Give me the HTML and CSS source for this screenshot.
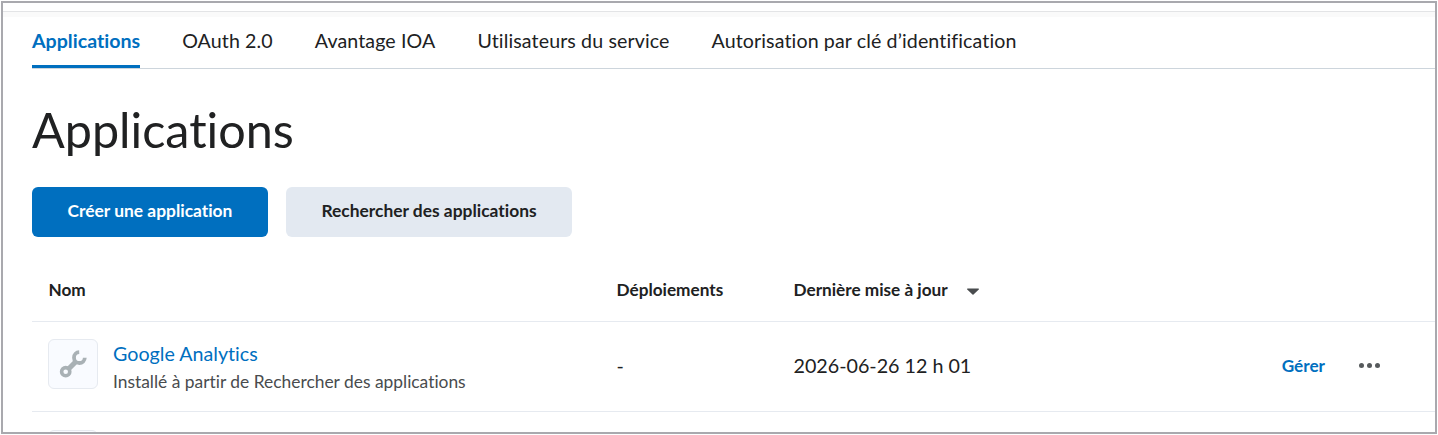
FILE: index.html
```html
<!DOCTYPE html>
<html lang="fr">

<head>
  <meta charset="UTF-8" />
  <title>Applications</title>
  <link rel="stylesheet" href="styles.css">
</head>

<body>
  <div class="frame">
    <div class="top-strip"></div>
    <div class="tab-nav">
      <a class="active" href="#">Applications</a>
      <a href="#">OAuth 2.0</a>
      <a href="#">Avantage IOA</a>
      <a href="#">Utilisateurs du service</a>
      <a href="#">Autorisation par clé d’identification</a>
    </div>
    <div class="content">
      <h1>Applications</h1>
      <div class="actions">
        <button class="btn primary">Créer une application</button>
        <button class="btn">Rechercher des applications</button>
      </div>
      <div class="row head">
        <div class="cell-name">Nom</div>
        <div>Déploiements</div>
        <div class="sort">Dernière mise à jour
          <svg width="12" height="7" viewBox="0 0 12 7"><path d="M.6.4h10.8c.5 0 .8.6.4 1L6.500 6.500c-.3.3-.7.3-1 0L.2 1.400C-.2 1 .1.400.6.400z" fill="#494c4e" /></svg>
        </div>
      </div>
      <div class="row">
        <div class="cell-name app">
          <div class="app-icon">
            <svg width="30" height="30" viewBox="0 0 30 30" fill="none" stroke="#a9b1b5">
              <circle cx="7.700" cy="22.700" r="4.100" stroke-width="3.600" />
              <path d="M10.500 20L18 12.500" stroke-width="5.200" />
              <path d="M21.200 3.200A5.400 5.400 0 1 0 26.800 8.800" stroke-width="3.800" />
            </svg>
          </div>
          <div>
            <a class="app-name" href="#">Google Analytics</a>
            <div class="app-note">Installé à partir de Rechercher des applications</div>
          </div>
        </div>
        <div class="cell-text">-</div>
        <div class="cell-text">2026-06-26 12 h 01</div>
        <div class="row-actions">
          <a href="#">Gérer</a>
          <span class="dots"><i></i><i></i><i></i></span>
        </div>
      </div>
      <div class="next-icon"></div>
    </div>
  </div>
</body>

</html>
```

FILE: styles.css
```css
* {
  margin: 0;
  padding: 0;
  box-sizing: border-box;
}

html,
body {
  height: 435px;
  overflow: hidden;
  background: #fff;
}

body {
  padding: 1px;
  font-family: Lato, "Noto Sans", sans-serif;
  font-variant-ligatures: none;
  color: #202122;
}

.frame {
  height: 433px;
  border: 2px solid #a9a9ae;
  overflow: hidden;
  background: #fff;
}

.top-strip {
  height: 6px;
  margin-top: 8px;
  border-top: 1px solid #e3e4e6;
  background: #fafafa;
}

.tab-nav {
  display: flex;
  gap: 42px;
  height: 52px;
  margin-left: 29px;
  border-bottom: 1px solid #cdd5dc;
}

.tab-nav a {
  height: 51px;
  padding-top: 12px;
  font-size: 19.600px;
  letter-spacing: .12px;
  line-height: 24px;
  color: #202122;
  text-decoration: none;
}

.tab-nav a.active {
  letter-spacing: 0;
  font-weight: 700;
  color: #006fbf;
  border-bottom: 3px solid #006fbf;
}

.content {
  padding-left: 29px;
}

h1 {
  margin-top: 30px;
  font-size: 48.500px;
  line-height: 60px;
  font-weight: 400;
}

.actions {
  display: flex;
  gap: 18px;
  margin-top: 28px;
}

.btn {
  height: 50px;
  width: 286px;
  padding-bottom: 3px;
  border: 0;
  border-radius: 6px;
  background: #e3e9f1;
  font-family: inherit;
  font-variant-ligatures: none;
  font-size: 17.400px;
  font-weight: 700;
  color: #202122;
}

.btn.primary {
  width: 236px;
  background: #006fbf;
  color: #fff;
}

.row {
  display: grid;
  grid-template-columns: 584.500px 177px 1fr auto;
  align-items: center;
  height: 90px;
  border-bottom: 1px solid #e6eaf0;
  font-size: 19.700px;
}

.row.head {
  height: 85px;
  padding-top: 20px;
  font-size: 17.200px;
  font-weight: 700;
}

.cell-name {
  padding-left: 16.500px;
}

.sort svg {
  margin-left: 15px;
  vertical-align: 1px;
}

.app {
  display: flex;
  align-items: center;
  gap: 15px;
  padding-left: 16px;
}

.app-icon,
.next-icon {
  width: 50px;
  height: 50px;
  margin-top: -6px;
  border: 1px solid #e6eaf0;
  border-radius: 6px;
  background: #f9fbff;
  display: flex;
  align-items: center;
  justify-content: center;
}

.next-icon {
  margin: 18px 0 0 16px;
}

.app-name {
  font-size: 19.700px;
  line-height: 26px;
  color: #006fbf;
  text-decoration: none;
}

.app-note {
  margin-top: 4px;
  font-size: 17.400px;
  line-height: 22px;
  color: #494c4e;
}

.cell-text {
  margin-top: -2px;
}

.row-actions {
  display: flex;
  align-items: center;
  gap: 34px;
  padding-right: 55px;
  margin-top: -2px;
}

.row-actions a {
  font-size: 17.200px;
  font-weight: 700;
  color: #006fbf;
  text-decoration: none;
}

.dots {
  display: flex;
  gap: 3px;
}

.dots i {
  width: 5px;
  height: 5px;
  border-radius: 50%;
  background: #565a5c;
}
```
